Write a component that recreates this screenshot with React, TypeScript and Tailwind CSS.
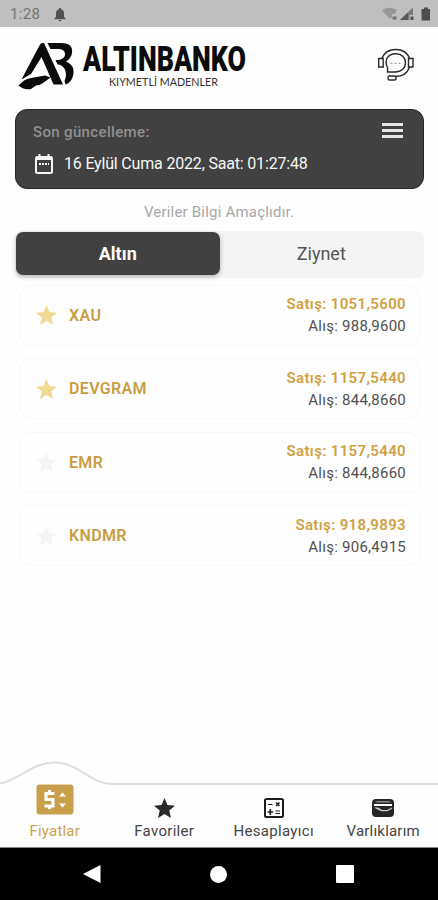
import React, { useState } from 'react';

interface Price {
  code: string;
  sell: string;
  buy: string;
  favorite: boolean;
}

const prices: Price[] = [
  { code: 'XAU', sell: '1051,5600', buy: '988,9600', favorite: true },
  { code: 'DEVGRAM', sell: '1157,5440', buy: '844,8660', favorite: true },
  { code: 'EMR', sell: '1157,5440', buy: '844,8660', favorite: false },
  { code: 'KNDMR', sell: '918,9893', buy: '906,4915', favorite: false },
];

const StarIcon: React.FC<{ className: string }> = ({ className }) => (
  <svg viewBox="2 2 20 19" className={className} fill="currentColor">
    <path d="M12 17.27 18.18 21l-1.64-7.03L22 9.24l-7.19-.61L12 2 9.19 8.63 2 9.24l5.46 4.73L5.82 21z" />
  </svg>
);

const StatusBar = () => (
  <div className="flex h-[27px] shrink-0 items-center bg-[#bfbfbf] pl-[10px] pr-[8px] pt-[2px] text-[#747474]">
    <span className="text-[15px] leading-none tracking-[0.3px]">1:28</span>
    <svg viewBox="0 0 12 14" className="ml-[14px] h-[14px] w-[12px]" fill="#505050">
      <path d="M6 0c-.8 0-1.1.5-1.1 1.2C3 1.700 2 3.200 2 5v3.700L.5 10.500v.7h11v-.7L10 8.700V5c0-1.800-1-3.300-2.900-3.800C7.100.5 6.800 0 6 0ZM4.700 12c0 .8.5 1.300 1.300 1.300s1.300-.5 1.300-1.300Z" />
    </svg>
    <svg viewBox="0 0 48 15" className="ml-auto h-[15px] w-[48px]">
      <path d="M0 3.500C4-.3 11-.3 15 3.500L12.500 7H10v3l-2 2Z" fill="#979797" />
      <path d="M10.500 9.500h4v3h-4Z" fill="#707070" />
      <path d="M18 13 31 .5V8h-3.500v5Z" fill="#7b7b7b" />
      <path d="M18 13 26 5.500V13Z" fill="#595959" />
      <path d="M28.500 9.500h3V13h-3Z" fill="#555" />
      <path d="M39.500 2H42V.5h4V2h2.500v11.500h-9Z" fill="#4d4d4d" />
    </svg>
  </div>
);

const Header = () => (
  <header className="flex h-[82px] shrink-0 items-start justify-between pl-[18px] pr-[23px] pt-[14px]">
    <svg viewBox="0 0 234 52" className="h-[52px] w-[234px] overflow-visible" fill="#0b0b0b">
      {/* AB monogram */}
      <path d="M22 3.500Q23 2 24.500 2H26L45 43.500H35.500L23.500 16 13 33 3.500 38.500Z" />
      <path d="M.5 44.500 6 39.500Q9 37.500 13 37L27 34.500 32.500 36.500 25 42Q22 44 18 44.500L13 48Q5 49 .5 44.500Z" />
      <path d="M29.500 2H43C52 2 55 6 54 12 53.500 16 51 18.500 48 20.500 54 23 56 27 55.500 32 55 38 51.500 42.500 47.500 43.500L46.500 40C49 35 48 29 45.500 26.500 43.500 24 41 23.500 39.500 23.500L37.500 19C42 19.500 47 17.500 47 13 47 9 43 8 40 8H32.500Z" />
      <text x="65" y="30.300" textLength="163" lengthAdjust="spacingAndGlyphs" className="font-[Roboto] text-[34.500px] font-black">ALTINBANKO</text>
      <text x="91" y="45" textLength="109" lengthAdjust="spacingAndGlyphs" className="font-[Lato] text-[10.500px]" fill="#333">KIYMETLİ MADENLER</text>
    </svg>
    <svg viewBox="0 0 38 34" className="mt-[7px] h-[34px] w-[38px]" fill="none" stroke="#292929" strokeWidth="1.400">
      <path d="M4.800 10.500C7 5 12 1.500 18.700 1.500S30.500 5 32.800 10.500" />
      <path d="M1.700 10.500h4.500v8.500H1.700zM31.500 10.500h4.500v8.500h-4.500z" />
      <path d="M10.500 24v-4.500C7 12.500 10.500 5.700 18.700 5.700c6 0 9.800 4 9.800 9.100S24.500 24 18.700 24Z" />
      <path d="M32.500 19C30.500 25 26 28.500 18.500 28.500" />
      <rect x="11" y="28" width="8" height="4" rx="1.500" />
      <path d="M13.500 15.300h2m2 0h2m2 0h2" stroke="#8c8c8c" strokeWidth="1" />
    </svg>
  </header>
);

const UpdateCard = () => (
  <section className="ml-[15px] mr-[14px] h-[80px] shrink-0 rounded-[12px] border border-[#252525] bg-[#414141] pl-[17px] pr-[20px] pt-[10px]">
    <div className="flex items-start justify-between">
      <span className="text-[15px] font-medium leading-[24px] tracking-[0.35px] text-[#8f8f8f]">Son güncelleme:</span>
      <button className="mt-[3px] flex h-[15px] w-[21px] flex-col justify-between" aria-label="Menü">
        <span className="h-[3px] w-full bg-[#e5e5e5]" />
        <span className="h-[3px] w-full bg-[#e5e5e5]" />
        <span className="h-[3px] w-full bg-[#e5e5e5]" />
      </button>
    </div>
    <div className="mt-[8px] flex items-center">
      <svg viewBox="0 0 18 20" className="ml-[2px] h-[20px] w-[18px]" fill="none" stroke="#f5f5f5" strokeWidth="2">
        <rect x="1" y="3" width="16" height="16" rx="1.500" />
        <path d="M1 5h16M4.500 0v4M13.500 0v4" />
        <path d="M4 10h10" strokeDasharray="2 1" />
      </svg>
      <span className="ml-[11px] pt-[1px] text-[16px] leading-[22px] tracking-[-0.18px] text-[#f7f7f7]">16 Eylül Cuma 2022, Saat: 01:27:48</span>
    </div>
  </section>
);

const PriceRow: React.FC<{ price: Price }> = ({ price }) => (
  <li className="flex h-[61px] items-center justify-between rounded-[12px] border border-[#f7f7f7] pl-[16px] pr-[13px]">
    <div className="flex items-center">
      <StarIcon className={price.favorite ? 'h-[20px] w-[21px] text-[#efdb96]' : 'h-[20px] w-[21px] text-[#f5f5f5]'} />
      <span className="ml-[12px] pt-[1px] text-[16px] font-semibold tracking-[0.35px] text-[#c99d42]">{price.code}</span>
    </div>
    <div className="text-right text-[15px] leading-[22px]">
      <p className="font-semibold tracking-[0.35px] text-[#d0a143]">Satış: {price.sell}</p>
      <p className="tracking-[0.25px] text-[#505050]">Alış: {price.buy}</p>
    </div>
  </li>
);

const PriceIcon = () => (
  <svg viewBox="0 0 38 31" className="h-[31px] w-[38px] shrink-0">
    <rect x="0.500" y="0.500" width="37" height="30" rx="3" fill="#c89f4a" />
    <path d="M18.500 9.500h-8.500v6h7v6.500H8.500M13.500 6v4M13.500 21v4" fill="none" stroke="#fff" strokeWidth="3.200" />
    <path d="M23 12.500 26.500 8.500 30 12.500ZM23 19.500h7L26.500 23.500Z" fill="#fff" />
  </svg>
);

const CalculatorIcon = () => (
  <svg viewBox="0 0 20 20" className="h-[20px] w-[20px]" fill="none" stroke="#1c1c1c">
    <rect x="1" y="1" width="18" height="18" rx="1.500" strokeWidth="2" />
    <path d="M4 6.500h4.500M11.500 13h4.500M11.500 15.500h4.500" strokeWidth="1.100" />
    <path d="M6.300 11v6M3.500 14h5.600M12 4.500l3.500 3.500M15.500 4.500 12 8" strokeWidth="1.600" />
  </svg>
);

const WalletIcon = () => (
  <svg viewBox="0 0 22 18" className="h-[18px] w-[22px]">
    <rect width="22" height="18" rx="4" fill="#262626" />
    <path d="M3 3.500Q3.500 2 5.500 2h11Q18.500 2 19 3.500Z" fill="#888" />
    <path d="M2 5h18v2H2Z" fill="#fff" />
    <path d="M2 8.500h4l4 2.500h5l5-2.500v1.200l-4.500 2.600H9.500L6 10.800Z" fill="#ccc" />
  </svg>
);

const BottomNav = () => (
  <nav className="shrink-0">
    <svg viewBox="0 0 438 26" className="block h-[26px] w-full" fill="none">
      <path d="M0 23.500C20 20 31 2.500 55 2.500S88 23 112 24H438" stroke="#dedede" strokeWidth="2" />
    </svg>
    <div className="grid h-[62px] grid-cols-4 grid-rows-1 border-b border-[#858585] text-[15px] leading-[18px] text-[#444]">
      <a className="flex flex-col items-center justify-end pb-[7px] tracking-[0.2px] text-[#cda14b]">
        <PriceIcon />
        <span className="mt-[7px]">Fiyatlar</span>
      </a>
      <a className="flex flex-col items-center justify-end pb-[7px] tracking-[0.3px]">
        <StarIcon className="h-[20px] w-[21px] text-[#292929]" />
        <span className="mt-[4px]">Favoriler</span>
      </a>
      <a className="flex flex-col items-center justify-end pb-[7px] tracking-[0.3px]">
        <CalculatorIcon />
        <span className="mt-[4px]">Hesaplayıcı</span>
      </a>
      <a className="flex flex-col items-center justify-end pb-[7px] tracking-[0.2px]">
        <WalletIcon />
        <span className="mt-[5px]">Varlıklarım</span>
      </a>
    </div>
  </nav>
);

const SystemNav = () => (
  <div className="flex h-[52px] shrink-0 items-center justify-between bg-black pl-[83px] pr-[84px]">
    <svg viewBox="0 0 18 18" className="h-[18px] w-[18px]" fill="#fff">
      <path d="M17.500 0v18L0 9Z" />
    </svg>
    <span className="h-[17px] w-[17px] rounded-full bg-white" />
    <span className="h-[18px] w-[18px] rounded-[1px] bg-white" />
  </div>
);

export default function App() {
  const [tab, setTab] = useState('altin');

  const activeTab = 'rounded-[7px] bg-[#414141] font-bold text-white shadow-[0_2px_5px_rgba(0,0,0,0.25)]';
  const idleTab = 'rounded-[7px] text-[#555]';

  return (
    <div className="flex h-[900px] w-[438px] flex-col overflow-hidden bg-[#fefefe] font-[Roboto,sans-serif]">
      <StatusBar />
      <Header />
      <UpdateCard />
      <p className="mt-[12px] shrink-0 text-center text-[15px] leading-[22px] tracking-[0.2px] text-[#a8a8a8]">Veriler Bilgi Amaçlıdır.</p>

      <div className="ml-[15px] mr-[14px] mt-[8px] grid h-[47px] shrink-0 grid-cols-2 rounded-[7px] bg-[#f4f4f4] px-[1px] pb-[3px] pt-[1px] text-[18px]">
        <button className={tab === 'altin' ? activeTab : idleTab} onClick={() => setTab('altin')}>Altın</button>
        <button className={tab === 'ziynet' ? activeTab : idleTab} onClick={() => setTab('ziynet')}>Ziynet</button>
      </div>

      <ul className="ml-[19px] mr-[18px] mt-[6.500px] flex flex-1 flex-col gap-[12.600px]">
        {prices.map((price) => (
          <PriceRow key={price.code} price={price} />
        ))}
      </ul>

      <BottomNav />
      <SystemNav />
    </div>
  );
}
